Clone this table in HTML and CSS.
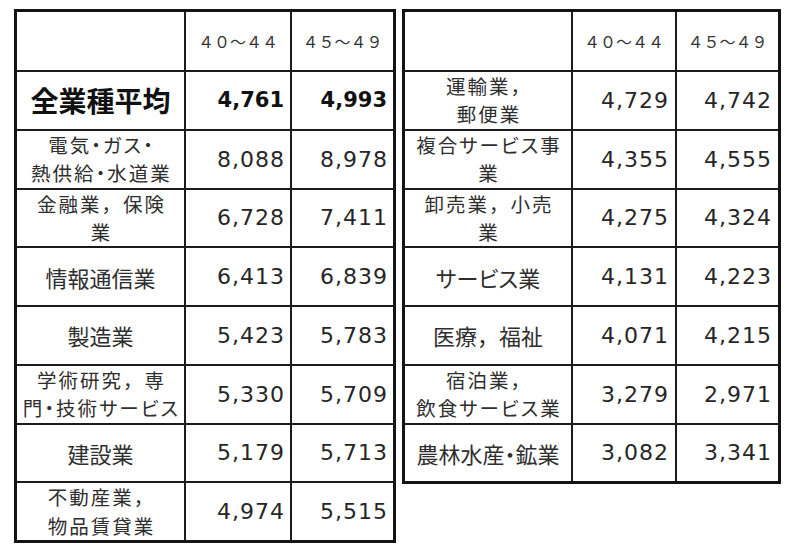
FILE: index.html
```html
<!DOCTYPE html>
<html lang="ja">
<head>
<meta charset="utf-8">
<link rel="stylesheet" href="styles.css">
</head>
<body>
<div class="page">
  <div class="tbl tbl-left">
    <div class="c lab"></div>
    <div class="c hd">４０～４４</div>
    <div class="c hd">４５～４９</div>

    <div class="c lab big">全業種平均</div>
    <div class="c num bold">4,761</div>
    <div class="c num bold">4,993</div>

    <div class="c lab two"><span class="p">電気・ガス・</span><span class="p">熱供給・水道業</span></div>
    <div class="c num">8,088</div>
    <div class="c num">8,978</div>

    <div class="c lab two"><span>金融業，保険</span><span>業</span></div>
    <div class="c num">6,728</div>
    <div class="c num">7,411</div>

    <div class="c lab">情報通信業</div>
    <div class="c num">6,413</div>
    <div class="c num">6,839</div>

    <div class="c lab">製造業</div>
    <div class="c num">5,423</div>
    <div class="c num">5,783</div>

    <div class="c lab two"><span>学術研究，専</span><span class="p">門・技術サービス</span></div>
    <div class="c num">5,330</div>
    <div class="c num">5,709</div>

    <div class="c lab">建設業</div>
    <div class="c num">5,179</div>
    <div class="c num">5,713</div>

    <div class="c lab two"><span>不動産業，</span><span>物品賃貸業</span></div>
    <div class="c num">4,974</div>
    <div class="c num">5,515</div>
  </div>

  <div class="tbl tbl-right">
    <div class="c lab"></div>
    <div class="c hd">４０～４４</div>
    <div class="c hd">４５～４９</div>

    <div class="c lab two"><span>運輸業，</span><span>郵便業</span></div>
    <div class="c num">4,729</div>
    <div class="c num">4,742</div>

    <div class="c lab two"><span class="p">複合サービス事</span><span>業</span></div>
    <div class="c num">4,355</div>
    <div class="c num">4,555</div>

    <div class="c lab two"><span>卸売業，小売</span><span>業</span></div>
    <div class="c num">4,275</div>
    <div class="c num">4,324</div>

    <div class="c lab"><span class="p">サービス業</span></div>
    <div class="c num">4,131</div>
    <div class="c num">4,223</div>

    <div class="c lab">医療，福祉</div>
    <div class="c num">4,071</div>
    <div class="c num">4,215</div>

    <div class="c lab two"><span>宿泊業，</span><span class="p">飲食サービス業</span></div>
    <div class="c num">3,279</div>
    <div class="c num">2,971</div>

    <div class="c lab"><span class="p">農林水産・鉱業</span></div>
    <div class="c num">3,082</div>
    <div class="c num">3,341</div>
  </div>
</div>
</body>
</html>
```

FILE: styles.css
```css
html, body {
  margin: 0;
  padding: 0;
  background: #ffffff;
}

body {
  width: 800px;
  height: 560px;
  overflow: hidden;
  font-family: "Noto Sans CJK JP", "Noto Sans", sans-serif;
  color: #2a2a2a;
}

.page {
  display: flex;
  align-items: flex-start;
  gap: 6px;
  padding: 9px 0 0 14px;
}

.tbl {
  display: grid;
  gap: 2px;
  background: #1c1c1c;
  border: 3px solid #141414;
}

.tbl-left {
  grid-template-columns: 167px 104px 101px;
  grid-template-rows: 58px repeat(8, 56.75px);
}

.tbl-right {
  grid-template-columns: 166px 102px 101px;
  grid-template-rows: 58px repeat(7, 56.75px);
}

.c {
  background: #ffffff;
  display: flex;
  align-items: center;
  overflow: hidden;
}

.lab {
  flex-direction: column;
  justify-content: center;
  align-items: center;
  font-size: 22px;
  line-height: 30px;
  white-space: nowrap;
  color: #2e2e2e;
}

.lab span {
  display: block;
}

.two {
  font-size: 19.5px;
  line-height: 28.3px;
  letter-spacing: 2px;
}

.two span {
  margin-right: -2px;
}

.p {
  font-feature-settings: "palt";
}

.big {
  font-size: 28px;
  font-weight: 700;
  color: #111111;
}

.hd {
  justify-content: center;
  font-size: 16px;
  color: #333333;
}

.num {
  justify-content: flex-end;
  padding-right: 5px;
  font-family: "DejaVu Sans", "Noto Sans", sans-serif;
  font-size: 22px;
  letter-spacing: 1px;
  color: #262626;
}

.tbl-right .num {
  padding-right: 6px;
}

.bold {
  font-weight: 700;
  font-size: 21px;
  letter-spacing: 0;
  padding-right: 6px;
  color: #111111;
}
```
